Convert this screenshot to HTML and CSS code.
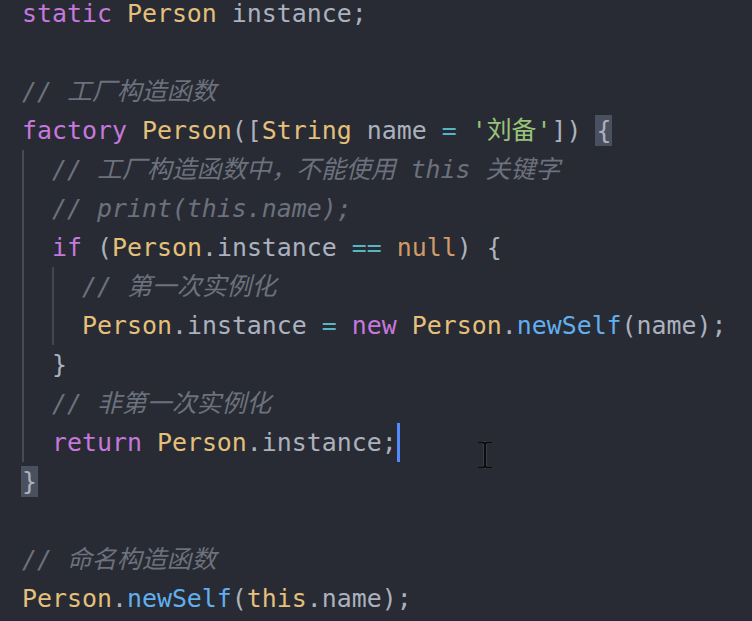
FILE: index.html
```html
<!DOCTYPE html>
<html lang="zh">
<head>
<meta charset="utf-8">
<title>Dart factory constructor</title>
<link rel="stylesheet" href="styles.css">
</head>
<body>
<div class="editor">
  <div class="code">
    <div class="line"><span class="kw">static</span> <span class="cls">Person</span> <span class="id">instance</span><span class="pn">;</span></div>
    <div class="line"> </div>
    <div class="line cm">// 工厂构造函数</div>
    <div class="line"><span class="kw">factory</span> <span class="cls">Person</span><span class="pn">([</span><span class="cls">String</span> <span class="id">name</span> <span class="op">=</span> <span class="str">'刘备'</span><span class="pn">])</span> <span class="match">{</span></div>
    <div class="block">
      <div class="line cm">// 工厂构造函数中，不能使用 this 关键字</div>
      <div class="line cm">// print(this.name);</div>
      <div class="line"><span class="kw">if</span> <span class="pn">(</span><span class="cls">Person</span><span class="pn">.</span><span class="id">instance</span> <span class="op">==</span> <span class="num">null</span><span class="pn">) {</span></div>
      <div class="block">
        <div class="line cm">// 第一次实例化</div>
        <div class="line"><span class="cls">Person</span><span class="pn">.</span><span class="id">instance</span> <span class="op">=</span> <span class="kw">new</span> <span class="cls">Person</span><span class="pn">.</span><span class="fn">newSelf</span><span class="pn">(</span><span class="id">name</span><span class="pn">);</span></div>
      </div>
      <div class="line"><span class="pn">}</span></div>
      <div class="line cm">// 非第一次实例化</div>
      <div class="line"><span class="kw">return</span> <span class="cls">Person</span><span class="pn">.</span><span class="id">instance</span><span class="pn">;</span><span class="caret"></span></div>
    </div>
    <div class="line"><span class="match">}</span></div>
    <div class="line"> </div>
    <div class="line cm">// 命名构造函数</div>
    <div class="line"><span class="cls">Person</span><span class="pn">.</span><span class="fn">newSelf</span><span class="pn">(</span><span class="cls">this</span><span class="pn">.</span><span class="id">name</span><span class="pn">);</span></div>
  </div>
  <svg class="ibeam" width="16" height="28" viewBox="0 0 16 28" aria-hidden="true">
    <path d="M1 1.5h5.5L8 3l1.5-1.5H15M8 3v22M1 26.5h5.5L8 25l1.5 1.5H15" fill="none" stroke="#ffffff" stroke-width="3.2" stroke-opacity="0.15"/>
    <path d="M1 1.5h5.5L8 3l1.5-1.5H15M8 3v22M1 26.5h5.5L8 25l1.5 1.5H15" fill="none" stroke="#0b0c0f" stroke-width="2"/>
  </svg>
</div>
</body>
</html>
```
FILE: styles.css
```css
html, body {
  margin: 0;
  padding: 0;
  background: #282b33;
  overflow: hidden;
}

.editor {
  position: relative;
  width: 752px;
  height: 621px;
  overflow: hidden;
  background: #282b33;
}

.code {
  margin-top: -6.5px;
  padding-left: 22px;
  font-family: "DejaVu Sans Mono", "Noto Sans CJK SC", monospace;
  font-size: 24.9px;
  color: #abb2bf;
}

.line {
  height: 39px;
  line-height: 39px;
  white-space: pre;
}

.block {
  padding-left: 28px;
  border-left: 2px solid #464b56;
}

.block .block {
  border-left-color: #41464f;
}

.kw { color: #c678dd; }
.cls { color: #e5c07b; }
.id { color: #abb2bf; }
.pn { color: #abb2bf; }
.op { color: #56b6c2; }
.str { color: #98c379; }
.num { color: #d19a66; }
.fn { color: #61afef; }

.cm {
  color: #6c717d;
  font-style: italic;
}

.match {
  background: #4a505d;
  box-shadow: 0 0 0 1px #4a505d;
}

.caret {
  display: inline-block;
  width: 3px;
  height: 39px;
  vertical-align: top;
  background: #528bff;
}

.ibeam {
  position: absolute;
  left: 477px;
  top: 441px;
}
```
